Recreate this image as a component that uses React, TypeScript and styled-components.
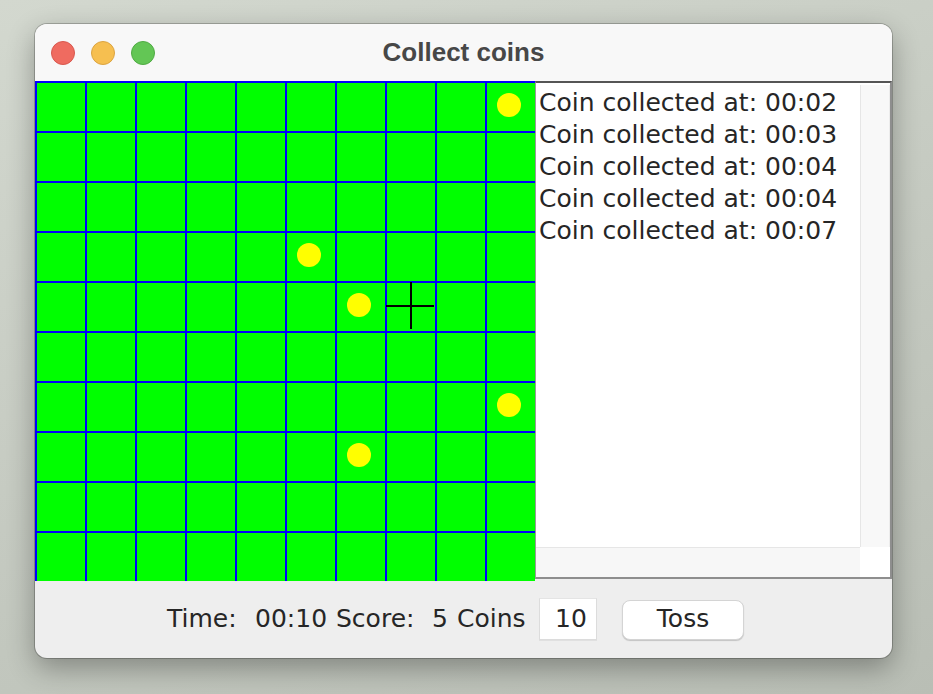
import styled, { createGlobalStyle } from "styled-components";

const GlobalStyle = createGlobalStyle`
  html, body {
    margin: 0;
    padding: 0;
  }
  body {
    width: 933px;
    height: 694px;
    overflow: hidden;
    background: linear-gradient(160deg, #d3d8cf 0%, #c4c9c0 55%, #b9beb5 100%);
  }
`;

const Page = styled.div`
  box-sizing: border-box;
  width: 933px;
  height: 694px;
  padding: 24px 0 0 35px;
`;

const Window = styled.div`
  width: 857px;
  height: 634px;
  border-radius: 12px;
  overflow: hidden;
  display: flex;
  flex-direction: column;
  background: #eeeeee;
  box-shadow: 0 0 0 1px rgba(0, 0, 0, 0.22), 0 10px 28px rgba(0, 0, 0, 0.32);
`;

const TitleBar = styled.div`
  height: 57px;
  flex: none;
  display: grid;
  grid-template-columns: 1fr auto 1fr;
  align-items: center;
  background: #f8f8f8;
`;

const Lights = styled.div`
  display: flex;
  gap: 16px;
  padding-left: 16px;
`;

const Light = styled.span<{ $fill: string; $edge: string }>`
  width: 24px;
  height: 24px;
  border-radius: 50%;
  box-sizing: border-box;
  background: ${(p) => p.$fill};
  border: 1px solid ${(p) => p.$edge};
`;

const Title = styled.div`
  font-family: "Liberation Sans", Arial, sans-serif;
  font-weight: bold;
  font-size: 26px;
  color: #474747;
`;

const Content = styled.div`
  height: 500px;
  flex: none;
  display: flex;
  background: #eeeeee;
`;

const Board = styled.div`
  width: 500px;
  height: 500px;
  flex: none;
  display: grid;
  grid-template-columns: repeat(10, 50px);
  grid-template-rows: repeat(10, 50px);
  background: #00ff00;
`;

const Cell = styled.div`
  position: relative;
  box-sizing: border-box;
  border-left: 2px solid #0000ff;
  border-top: 2px solid #0000ff;
`;

const Coin = styled.div`
  width: 24px;
  height: 24px;
  margin: 10px 0 0 10px;
  border-radius: 50%;
  background: #ffff00;
`;

const Cross = styled.svg`
  position: absolute;
  left: -2px;
  top: -2px;
`;

const ScrollPane = styled.div`
  width: 357px;
  height: 498px;
  box-sizing: border-box;
  border-top: 2px solid #555555;
  border-left: 1px solid #9a9a9a;
  border-right: 2px solid #8e8e8e;
  border-bottom: 2px solid #8e8e8e;
  display: grid;
  grid-template-columns: 1fr 30px;
  grid-template-rows: 1fr 30px;
  background: #ffffff;
`;

const Viewport = styled.div`
  padding: 4px 0 0 3px;
  font-family: "DejaVu Sans", Verdana, sans-serif;
  font-size: 25px;
  line-height: 32px;
  color: #262626;
  white-space: nowrap;
  overflow: hidden;
`;

const VTrack = styled.div`
  margin-top: 2px;
  box-sizing: border-box;
  background: #f8f8f8;
  border-left: 1px solid #e6e6e6;
  border-right: 1px solid #ececec;
`;

const HTrack = styled.div`
  box-sizing: border-box;
  background: #f7f7f7;
  border-top: 1px solid #e6e6e6;
`;

const Corner = styled.div`
  background: #ffffff;
`;

const BottomBar = styled.div`
  flex: 1;
  display: flex;
  align-items: center;
  padding: 0 0 2px 132px;
  font-family: "DejaVu Sans", Verdana, sans-serif;
  font-size: 25px;
  color: #262626;
`;

const Label = styled.span<{ $w: number }>`
  width: ${(p) => p.$w}px;
  flex: none;
  white-space: nowrap;
`;

const Field = styled.div`
  width: 58px;
  height: 42px;
  box-sizing: border-box;
  padding-left: 15px;
  display: flex;
  align-items: center;
  background: #ffffff;
  border: 1px solid #dcdcdc;
  border-top-color: #e4e4e4;
  box-shadow: 0 1px 0 rgba(0, 0, 0, 0.06);
`;

const Button = styled.button`
  width: 122px;
  height: 40px;
  margin-left: 25px;
  margin-top: 3px;
  padding: 0 0 3px;
  border: 1px solid #d4d4d4;
  border-radius: 8px;
  background: #ffffff;
  box-shadow: 0 1px 1px rgba(0, 0, 0, 0.18);
  font-family: "DejaVu Sans", Verdana, sans-serif;
  font-size: 25px;
  color: #262626;
`;

const coins = new Set(["0-9", "3-5", "4-6", "6-9", "7-6"]);
const cursorCell = "4-7";

const log = ["00:02", "00:03", "00:04", "00:04", "00:07"];

export default function App() {
  const cells = [];
  for (let r = 0; r < 10; r++) {
    for (let c = 0; c < 10; c++) {
      const key = `${r}-${c}`;
      cells.push(
        <Cell key={key}>
          {coins.has(key) && <Coin />}
          {key === cursorCell && (
            <Cross width="52" height="52" viewBox="0 0 52 52">
              <line x1="1" y1="25" x2="49" y2="25" stroke="#000" strokeWidth="2" />
              <line x1="26" y1="1" x2="26" y2="48" stroke="#000" strokeWidth="2" />
            </Cross>
          )}
        </Cell>
      );
    }
  }

  return (
    <>
      <GlobalStyle />
      <Page>
        <Window>
          <TitleBar>
            <Lights>
              <Light $fill="#ef6b60" $edge="#d9584e" />
              <Light $fill="#f6bf50" $edge="#dca441" />
              <Light $fill="#63c655" $edge="#50ab44" />
            </Lights>
            <Title>Collect coins</Title>
            <div />
          </TitleBar>
          <Content>
            <Board>{cells}</Board>
            <ScrollPane>
              <Viewport>
                {log.map((t, i) => (
                  <div key={i}>Coin collected at: {t}</div>
                ))}
              </Viewport>
              <VTrack />
              <HTrack />
              <Corner />
            </ScrollPane>
          </Content>
          <BottomBar>
            <Label $w={88}>Time:</Label>
            <Label $w={81}>00:10</Label>
            <Label $w={96}>Score:</Label>
            <Label $w={25}>5</Label>
            <Label $w={82}>Coins</Label>
            <Field>10</Field>
            <Button>Toss</Button>
          </BottomBar>
        </Window>
      </Page>
    </>
  );
}
